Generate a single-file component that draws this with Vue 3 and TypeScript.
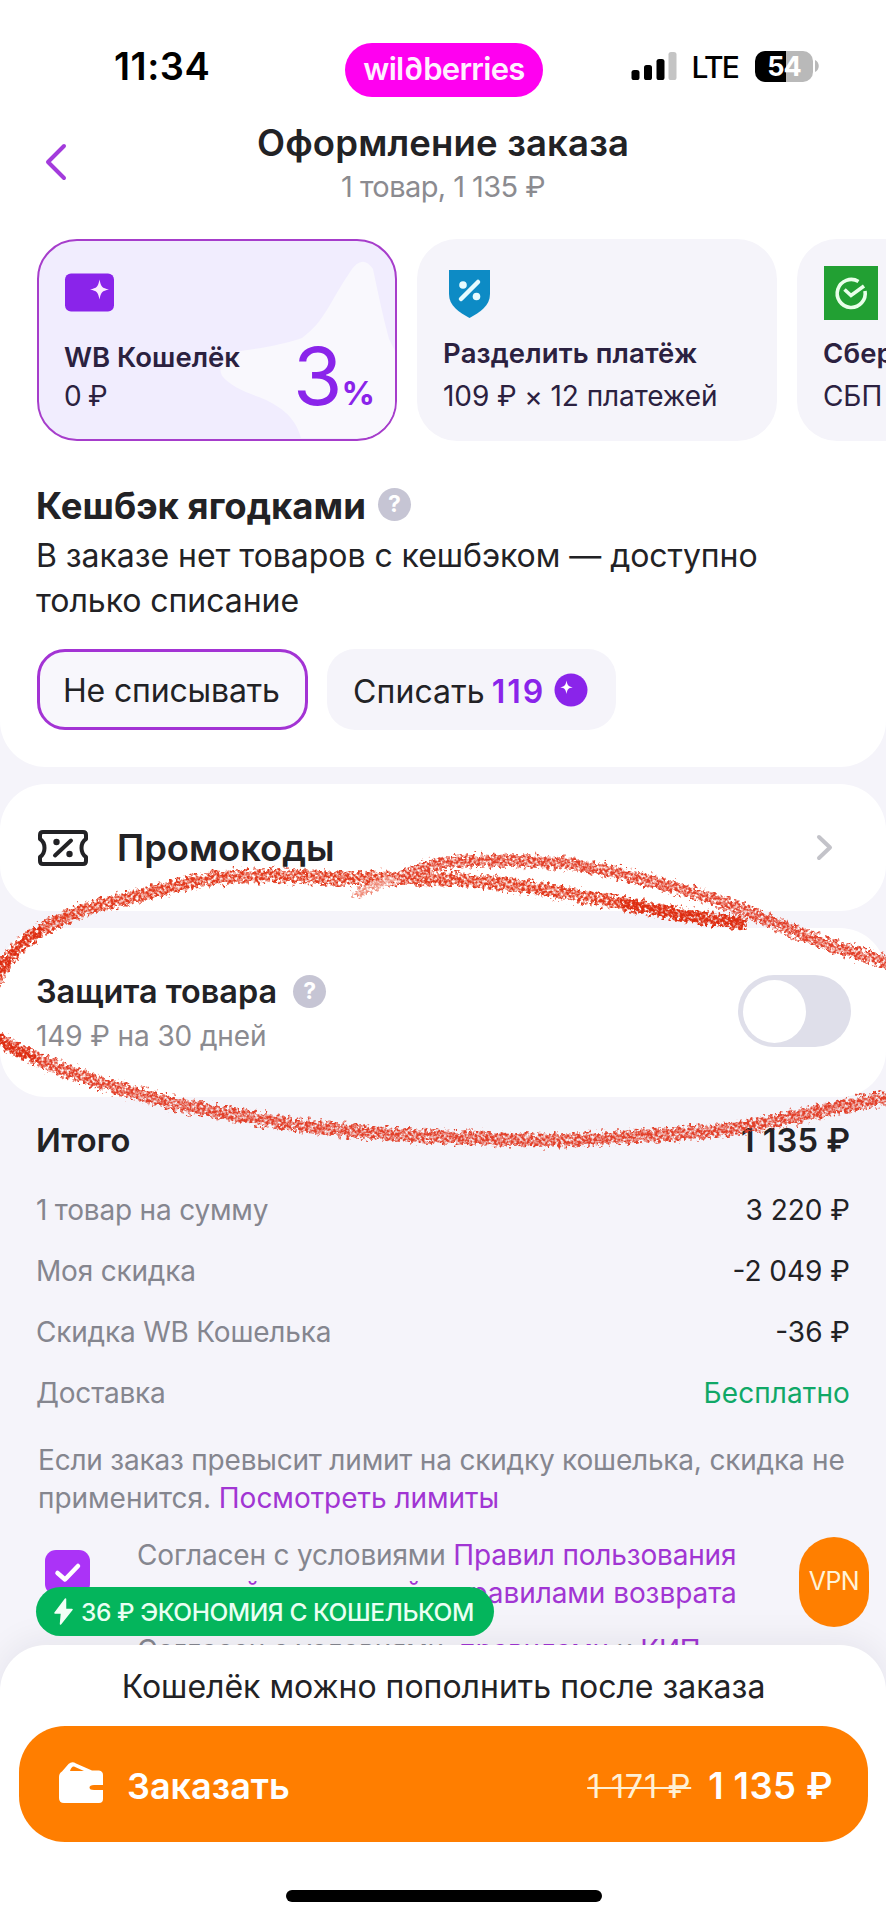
<script setup lang="ts">
interface SummaryRow {
  label: string
  value: string
  free?: boolean
}

const summary: SummaryRow[] = [
  { label: '1 товар на сумму', value: '3 220 ₽' },
  { label: 'Моя скидка', value: '-2 049 ₽' },
  { label: 'Скидка WB Кошелька', value: '-36 ₽' },
  { label: 'Доставка', value: 'Бесплатно', free: true },
]
</script>

<template>
  <div class="screen">
    <section class="panel checkout">
      <div class="status">
        <span class="time">11:34</span>
        <span class="brand">wil∂berries</span>
        <div class="indicators">
          <svg class="signal" width="46" height="30" viewBox="0 0 46 30">
            <rect x="0.5" y="19" width="8" height="10" rx="2.6" />
            <rect x="13" y="14" width="8" height="15" rx="2.6" />
            <rect x="25.5" y="8" width="8" height="21" rx="2.6" />
            <rect x="37.5" y="1" width="8" height="28" rx="2.6" fill="#c4c4c4" />
          </svg>
          <span class="lte">LTE</span>
          <span class="battery">54</span>
          <svg width="4" height="12" viewBox="0 0 4 12"><path d="M0 0C5 2 5 10 0 12z" fill="#b9b9b9" /></svg>
        </div>
      </div>

      <header class="header">
        <svg class="back" width="26" height="40" viewBox="0 0 26 40">
          <path d="M21 4 5 20l16 16" fill="none" stroke="#a33bdc" stroke-width="4" stroke-linecap="round" stroke-linejoin="round" />
        </svg>
        <div class="titles">
          <h1>Оформление заказа</h1>
          <p>1 товар, 1 135 ₽</p>
        </div>
      </header>

      <div class="cards">
        <article class="card selected">
          <svg class="star-bg" width="356" height="197" viewBox="0 0 356 197">
            <path
              d="M311 31Q323 12 334 28C339 52 344 76 350 98L356 110V197H262C256 174 239 164 220 156C203 150 191 144 184 136C179 130 181 118 196 111C224 107 246 103 263 97C286 80 290 62 311 31z"
              fill="#f9f8fd"
            />
          </svg>
          <svg class="wallet-icon" width="51" height="39" viewBox="0 0 51 39">
            <rect x="1" y="0.5" width="49" height="38" rx="6" fill="#8a24ea" />
            <path d="M35.500 6.500C37 14 38 15 45 16.500C38 18 37 19 35.500 26.500C34 19 33 18 26 16.500C33 15 34 14 35.500 6.500z" fill="#fbe9ff" />
          </svg>
          <h3>WB Кошелёк</h3>
          <p class="tight">0 ₽</p>
          <div class="percent"><span>3</span><b>%</b></div>
        </article>
        <article class="card">
          <svg class="shield" width="41" height="48" viewBox="0 0 41 48">
            <path d="M0 0h41v24C41 36 31 42 20.500 48C10 42 0 36 0 24z" fill="#0d8bc5" />
            <path d="M12 29 29 12" stroke="#e6fbff" stroke-width="4.500" stroke-linecap="round" />
            <circle cx="14" cy="15" r="3.800" fill="#e6fbff" />
            <circle cx="27.500" cy="26.500" r="3.800" fill="#e6fbff" />
          </svg>
          <h3>Разделить платёж</h3>
          <p>109 ₽ × 12 платежей</p>
        </article>
        <article class="card">
          <svg class="sber" width="54" height="54" viewBox="0 0 54 54">
            <rect width="54" height="54" fill="#22a033" />
            <g fill="none" stroke="#e8ffe9" stroke-width="3.600">
              <path d="M34.500 15.500A14 14 0 1 0 41 25" />
              <path d="M20.500 23.500 27 29.500 40 20" />
            </g>
          </svg>
          <h3>Сбер</h3>
          <p>СБП</p>
        </article>
      </div>

      <div class="cashback">
        <div class="heading">
          <h2>Кешбэк ягодками</h2>
          <span class="help">?</span>
        </div>
        <p class="note">В заказе нет товаров с кешбэком — доступно<br />только списание</p>
        <div class="choices">
          <button class="choice active" type="button">Не списывать</button>
          <button class="choice" type="button">
            <span class="spend">Списать</span><b>119</b>
            <svg width="34" height="34" viewBox="0 0 34 34">
              <circle cx="17" cy="17" r="16.500" fill="#8a24ea" />
              <path d="M12.500 7.500C13.500 12.500 14 13.200 18.800 14.300C14 15.400 13.500 16 12.500 21C11.500 16 11 15.400 6.200 14.300C11 13.200 11.500 12.500 12.500 7.500z" fill="#fff" />
            </svg>
          </button>
        </div>
      </div>
    </section>

    <section class="panel promo">
      <svg width="50" height="36" viewBox="0 0 50 36">
        <g fill="none" stroke="#222225" stroke-width="4" stroke-linejoin="round" stroke-linecap="round">
          <path d="M5 2H45Q48 2 48 5V9C42 13 42 23 48 27V31Q48 34 45 34H5Q2 34 2 31V27C8 23 8 13 2 9V5Q2 2 5 2z" />
          <path d="M17 25.500 33 10.500" />
        </g>
        <circle cx="18.500" cy="12" r="3.200" fill="#222225" />
        <circle cx="31.500" cy="24" r="3.200" fill="#222225" />
      </svg>
      <h2>Промокоды</h2>
      <svg class="chevron" width="17" height="27" viewBox="0 0 17 27">
        <path d="M3 3l11 10.500L3 24" fill="none" stroke="#c3c3c9" stroke-width="4" stroke-linecap="round" stroke-linejoin="round" />
      </svg>
    </section>

    <section class="panel protection">
      <div>
        <div class="heading">
          <h2>Защита товара</h2>
          <span class="help">?</span>
        </div>
        <p>149 ₽ на 30 дней</p>
      </div>
      <span class="toggle"><i></i></span>
    </section>

    <section class="summary">
      <div class="total"><span>Итого</span><span>1 135 ₽</span></div>
      <div v-for="row in summary" :key="row.label" class="row">
        <span>{{ row.label }}</span>
        <span class="value" :class="{ free: row.free }">{{ row.value }}</span>
      </div>
      <p class="limit">
        <span class="limit-first">Если заказ превысит лимит на скидку кошелька, скидка не</span><br />применится. <a>Посмотреть лимиты</a>
      </p>
      <div class="agreement">
        <svg width="45" height="45" viewBox="0 0 45 45">
          <rect width="45" height="45" rx="11" fill="#ab33f7" />
          <path d="M12.500 23 20 29.500 33 16" fill="none" stroke="#fff" stroke-width="4.500" stroke-linecap="round" stroke-linejoin="round" />
        </svg>
        <div class="terms">
          <p><span class="terms-first">Согласен с условиями <a>Правил пользования</a></span><br /><a>торговой площадкой</a> <a>и правилами возврата</a></p>
          <p class="terms-last">Согласен с условиями, <a>правилами</a> и <a>КИП</a></p>
        </div>
      </div>
    </section>

    <svg class="crayon" width="886" height="360" viewBox="0 820 886 360">
      <defs>
        <filter id="grain" x="-20" y="820" width="930" height="360" filterUnits="userSpaceOnUse" color-interpolation-filters="sRGB">
          <feTurbulence type="fractalNoise" baseFrequency="0.26" numOctaves="2" seed="7" result="edge" />
          <feDisplacementMap in="SourceGraphic" in2="edge" scale="13" xChannelSelector="R" yChannelSelector="G" result="rough" />
          <feTurbulence type="fractalNoise" baseFrequency="0.36" numOctaves="2" seed="21" result="dots" />
          <feColorMatrix in="dots" type="matrix" values="0 0 0 0 0  0 0 0 0 0  0 0 0 0 0  2.6 0 0 0 -0.6" result="mask" />
          <feComposite in="rough" in2="mask" operator="in" result="chalk" />
          <feGaussianBlur in="chalk" stdDeviation="0.55" />
        </filter>
      </defs>
      <g fill="none" stroke-linecap="round" stroke-linejoin="round" filter="url(#grain)">
        <path
          d="M741 923C690 917 640 906 603 900S510 881 443 879S350 880 313 877S215 875 180 885S100 902 67 917S20 943 10 957S-8 985 -12 995"
          stroke="#e23a1e" stroke-width="13"
        />
        <path
          d="M-12 1028C5 1046 15 1048 33 1057S60 1068 83 1077S120 1088 150 1097S180 1105 207 1110S260 1119 283 1123S400 1136 443 1137S540 1142 593 1139S700 1134 743 1127S850 1104 898 1095"
          stroke="#e2402a" stroke-width="13"
        />
        <path
          d="M898 965C870 957 855 953 836 947S790 930 763 918S705 896 676 888S590 865 560 863S470 859 443 863S400 880 390 881"
          stroke="#e2402a" stroke-width="12"
        />
        <path d="M394 880C378 884 368 888 358 893" stroke="#ee8a78" stroke-width="9" />
      </g>
      <g fill="none" stroke="#dd2c10" stroke-linecap="round" filter="url(#grain)">
        <path d="M741 923C700 919 660 910 625 904" stroke-width="11" />
        <path d="M40 931C20 943 5 960 -8 985M-8 1032C5 1047 15 1048 36 1059" stroke-width="8" />
      </g>
    </svg>

    <div class="saving">
      <svg width="19" height="27" viewBox="0 0 19 27">
        <path d="M11.500 1 1 15h6.500L6.500 26 18 11.500h-6.500z" fill="#f2fff7" stroke="#f2fff7" stroke-width="1.500" stroke-linejoin="round" />
      </svg>
      <span>36 ₽ ЭКОНОМИЯ С КОШЕЛЬКОМ</span>
    </div>
    <div class="vpn">VPN</div>

    <footer class="sheet">
      <p>Кошелёк можно пополнить после заказа</p>
      <button class="order" type="button">
        <svg width="46" height="42" viewBox="0 0 46 42">
          <path
            fill-rule="evenodd"
            d="M1 15Q1 11 4 9.500L10.500 2Q14 -1 18 1.500L34 8.500H41Q45 9 45 13V23H36Q31.500 23 31.500 25.500T36 28H45V37Q45 41 41 41H6Q1 41 1 36zM12 9H26L16 4.500Q13.500 4 12 9z"
            fill="#fff"
          />
        </svg>
        <span class="order-label">Заказать</span>
        <s>1 171 ₽</s>
        <strong>1 135 ₽</strong>
      </button>
      <div class="home"></div>
    </footer>
  </div>
</template>

<style>
html,
body {
  margin: 0;
  background: #f5f4fa;
}
</style>

<style scoped>
.screen {
  position: relative;
  width: 886px;
  height: 1920px;
  overflow: hidden;
  background: #f5f4fa;
  color: #222225;
  font-family: Inter, 'Noto Sans', sans-serif;
  font-size: 28px;
  white-space: nowrap;
}
h1, h2, h3, p { margin: 0; }
svg { display: block; flex: none; }
button { border: 0; font-family: inherit; color: inherit; margin: 0; }
a { color: #a135d3; }

.panel {
  box-sizing: border-box;
  background: #fff;
  border-radius: 46px;
}
.checkout {
  height: 767px;
  border-radius: 0 0 46px 46px;
}

/* status bar */
.status {
  box-sizing: border-box;
  height: 123px;
  padding: 9px 67px 0 114px;
  display: grid;
  grid-template-columns: 231px 198px 1fr;
  align-items: center;
  color: #000;
}
.time { font-size: 38px; font-weight: 600; letter-spacing: 0.5px; line-height: 40px; }
.brand {
  height: 54px;
  margin-top: 8px;
  border-radius: 27px;
  background: #ff00f0;
  color: #fff0ff;
  font-size: 31px;
  font-weight: 600;
  letter-spacing: -0.7px;
  line-height: 51px;
  text-align: center;
}
.indicators { display: flex; align-items: center; justify-content: flex-end; }
.signal { margin-right: 15px; }
.lte { font-size: 30px; font-weight: 500; letter-spacing: -1.8px; margin-right: 17px; padding-top: 2px; }
.battery {
  width: 58px;
  height: 31px;
  margin-right: 2px;
  border-radius: 10px;
  background: linear-gradient(90deg, #000 31px, #b9b9b9 31px);
  color: #fff;
  font-size: 27px;
  font-weight: 700;
  letter-spacing: -1px;
  line-height: 31px;
  text-align: center;
}

/* header */
.header {
  height: 116px;
  display: grid;
  grid-template-columns: 69px 1fr 69px;
}
.back { margin: 19px 0 0 43px; }
.titles { text-align: center; }
h1 { font-size: 36.5px; font-weight: 600; line-height: 41px; letter-spacing: 0.16px; }
.titles p { font-size: 29px; line-height: 45px; letter-spacing: -0.58px; color: #8b8b90; }

/* payment cards */
.cards { display: flex; gap: 20px; padding-left: 37px; overflow: hidden; }
.card {
  position: relative;
  box-sizing: border-box;
  flex: none;
  display: flex;
  flex-direction: column;
  width: 360px;
  height: 202px;
  padding: 0 27px 27px;
  border-radius: 40px;
  background: #f5f4fa;
  color: #2b2140;
  overflow: hidden;
}
.card.selected { padding: 0 25px 25px; border: 2px solid #a63dcb; background: #f1edfe; }
.card > svg { margin-bottom: auto; }
.star-bg { position: absolute; inset: 0; }
.wallet-icon { margin-top: 32px; position: relative; }
.shield { margin: 31px 0 0 5px; }
.sber { margin-top: 27px; }
h3 { font-size: 27.5px; font-weight: 600; line-height: 36px; margin-bottom: 7px; letter-spacing: 0.13px; margin-left: -1px; }
.selected h3 { margin: 0 0 3px; letter-spacing: 0; position: relative; }
.card p { line-height: 36px; letter-spacing: -0.08px; position: relative; margin-left: -1px; }
.card .tight { letter-spacing: -0.77px; margin-left: 0; }
.percent {
  position: absolute;
  left: 254px;
  bottom: -4px;
  line-height: 96px;
  color: #8a24ea;
}
.percent span { font-size: 80px; font-weight: 400; letter-spacing: -1px; }
.percent b { font-size: 33px; }

/* cashback */
.cashback { padding: 45px 35px 0 36px; }
.heading { display: flex; align-items: center; }
.heading h2 { font-size: 36.500px; font-weight: 700; line-height: 40px; }
.help {
  width: 33px;
  height: 33px;
  margin: -3px 0 0 12px;
  border-radius: 50%;
  background: #c6c5d4;
  color: #fff;
  font-size: 23px;
  font-weight: 700;
  line-height: 33px;
  text-align: center;
}
.note { margin-top: 7px; font-size: 32px; line-height: 45px; letter-spacing: -0.05px; }
.choices { display: flex; gap: 19px; padding: 26px 0 0 1px; }
.choice {
  box-sizing: border-box;
  display: flex;
  align-items: center;
  height: 81px;
  padding: 3px 28px 0 26px;
  border-radius: 28px;
  background: #f5f4fa;
  font-size: 32px;
  letter-spacing: 0.1px;
}
.choice.active { width: 271px; padding: 2px 0 0 23px; border: 3px solid #a333d4; background: #f8f7fc; letter-spacing: -0.16px; }
.choice b { margin: 0 9px 0 7px; font-weight: 600; letter-spacing: 2px; color: #8a24ea; }
.choice svg { margin-top: -2px; }

/* promo codes */
.promo {
  display: flex;
  align-items: center;
  height: 127px;
  margin-top: 17px;
  padding: 0 53px 0 38px;
}
.promo h2 { margin-left: 29px; font-size: 36.400px; font-weight: 600; }
.chevron { margin-left: auto; }

/* product protection */
.protection {
  display: flex;
  justify-content: space-between;
  height: 169px;
  margin-top: 17px;
  padding: 44px 35px 0 36px;
}
.protection h2 { font-size: 32.400px; font-weight: 600; }
.protection .help { margin: -2px 0 0 16px; }
.protection p { margin-top: 4px; line-height: 40px; letter-spacing: -0.11px; color: #8b8b90; }
.toggle {
  box-sizing: border-box;
  width: 113px;
  height: 72px;
  margin-top: 3px;
  padding: 4.5px;
  border-radius: 36px;
  background: #dfdfea;
}
.toggle i { display: block; width: 63px; height: 63px; border-radius: 50%; background: #fff; }

/* order summary */
.summary { padding: 23px 36px 0; }
.total {
  display: flex;
  justify-content: space-between;
  margin-bottom: 20px;
  font-size: 32.700px;
  font-weight: 600;
  line-height: 40px;
}
.row { display: flex; justify-content: space-between; line-height: 61px; letter-spacing: -0.2px; color: #85868f; }
.value { color: #222225; letter-spacing: 0; }
.value.free { color: #10a867; letter-spacing: 0.1px; }
.limit { margin: 17px 0 0 2px; line-height: 38px; letter-spacing: -0.03px; color: #85868f; }
.limit-first { letter-spacing: -0.2px; }
.agreement { display: flex; margin-top: 19px; padding-left: 9px; color: #85868f; }
.agreement svg { margin-top: 14px; }
.terms { margin-left: 47px; line-height: 38px; letter-spacing: -0.07px; }
.terms-first { letter-spacing: -0.17px; }
.terms .terms-last { margin-top: 19px; letter-spacing: -0.26px; }

.crayon { position: absolute; left: 0; top: 820px; }

/* floating badges */
.saving {
  position: absolute;
  z-index: 2;
  left: 36px;
  top: 1587px;
  box-sizing: border-box;
  width: 458px;
  height: 49px;
  padding-left: 18px;
  display: flex;
  align-items: center;
  gap: 8px;
  border-radius: 25px;
  background: #04b55c;
  color: #eafff3;
  font-size: 24.5px;
  font-weight: 500;
  letter-spacing: -0.43px;
}
.vpn {
  position: absolute;
  z-index: 2;
  left: 799px;
  top: 1537px;
  width: 70px;
  height: 90px;
  border-radius: 35px;
  background: #ff7f00;
  color: #fff3d8;
  font-size: 25px;
  line-height: 89px;
  letter-spacing: -0.6px;
  text-align: center;
}

/* bottom sheet */
.sheet {
  position: absolute;
  left: 0;
  top: 1645px;
  box-sizing: border-box;
  width: 886px;
  height: 275px;
  padding: 22px 18px 0 19px;
  border-radius: 46px 46px 0 0;
  background: #fff;
  box-shadow: 0 -4px 34px rgba(30, 30, 40, 0.07);
}
.sheet p { font-size: 32px; line-height: 40px; text-align: center; }
.order {
  box-sizing: border-box;
  display: flex;
  align-items: center;
  width: 849px;
  height: 116px;
  margin-top: 19px;
  padding: 4px 35px 0 39px;
  border-radius: 46px;
  background: #ff7e00;
  color: #fff;
}
.order svg { margin-top: -6px; }
.order-label { margin: 0 auto 0 23px; font-size: 36px; font-weight: 600; }
.order s { margin-right: 17px; font-size: 32.500px; letter-spacing: 0.7px; text-decoration-thickness: 2px; color: #fff0d4; }
.order strong { font-size: 36.500px; font-weight: 600; letter-spacing: 0.4px; }
.home { width: 316px; height: 12px; margin: 48px auto 0; border-radius: 6px; background: #000; }
</style>
